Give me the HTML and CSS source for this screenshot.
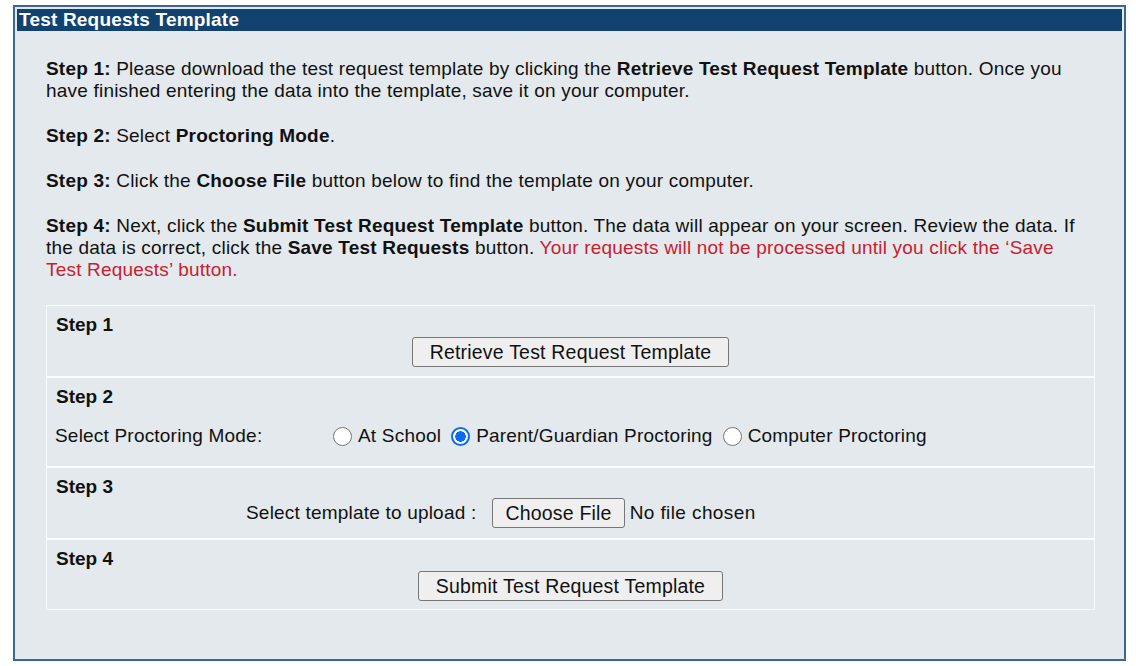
FILE: index.html
```html
<!DOCTYPE html>
<html>
<head>
<meta charset="utf-8">
<link rel="stylesheet" href="styles.css">
</head>
<body>
<div class="panel">
  <div class="panel-title">Test Requests Template</div>
  <div class="panel-body">
    <p><b>Step 1:</b> Please download the test request template by clicking the <b>Retrieve Test Request Template</b> button. Once you have finished entering the data into the template, save it on your computer.</p>
    <p><b>Step 2:</b> Select <b>Proctoring Mode</b>.</p>
    <p><b>Step 3:</b> Click the <b>Choose File</b> button below to find the template on your computer.</p>
    <p><b>Step 4:</b> Next, click the <b>Submit Test Request Template</b> button. The data will appear on your screen. Review the data. If the data is correct, click the <b>Save Test Requests</b> button. <span class="warn">Your requests will not be processed until you click the ‘Save Test Requests’ button.</span></p>

    <div class="steps">
      <div class="step-row">
        <div class="step-label">Step 1</div>
        <div class="center-line"><button class="btn btn-retrieve" type="button">Retrieve Test Request Template</button></div>
      </div>
      <div class="step-row step-row-2">
        <div class="step-label">Step 2</div>
        <div class="mode-line">
          <span class="mode-label">Select Proctoring Mode:</span>
          <label class="radio"><span class="dot"></span>At School</label>
          <label class="radio"><span class="dot checked"></span>Parent/Guardian Proctoring</label>
          <label class="radio"><span class="dot"></span>Computer Proctoring</label>
        </div>
      </div>
      <div class="step-row step-row-3">
        <div class="step-label">Step 3</div>
        <div class="upload-line">
          <span class="upload-label">Select template to upload :</span>
          <button class="btn btn-file" type="button">Choose File</button>
          <span class="file-name">No file chosen</span>
        </div>
      </div>
      <div class="step-row">
        <div class="step-label">Step 4</div>
        <div class="center-line"><button class="btn btn-submit" type="button">Submit Test Request Template</button></div>
      </div>
    </div>
  </div>
</div>
</body>
</html>
```

FILE: styles.css
```css
* { box-sizing: border-box; }

body {
  margin: 0;
  background: #ffffff;
  font-family: "Liberation Sans", Arial, sans-serif;
  font-size: 19px;
  letter-spacing: 0.2px;
  color: #111111;
}

.panel {
  margin: 5px 0 0 13px;
  width: 1113px;
  height: 656px;
  border: 2px solid #3b6792;
  background: #e3e9ec;
  padding: 2px;
}

.panel-title {
  background: #12426f;
  color: #ffffff;
  font-weight: bold;
  letter-spacing: 0.2px;
  height: 22px;
  line-height: 22px;
  padding-left: 2px;
}

.panel-body {
  display: flex;
  flex-direction: column;
  gap: 23px;
  padding: 27px 27px 0 29px;
}

.panel-body p {
  margin: 0 8px 0 0;
  line-height: 22px;
}

.warn { color: #c8202f; }

.steps {
  margin-top: 1px;
  border: 1px solid #f7f9fa;
  display: flex;
  flex-direction: column;
}

.step-row {
  padding: 8px 9px 9px;
  border-bottom: 2px solid #fbfcfd;
}
.step-row:last-child { border-bottom: none; padding-bottom: 8px; }

.step-label {
  font-weight: bold;
  letter-spacing: 0;
  line-height: 22px;
}

.center-line {
  display: flex;
  justify-content: center;
  margin-top: 1px;
}

.btn {
  font-family: inherit;
  font-size: 19.5px;
  letter-spacing: 0.2px;
  color: #111111;
  height: 30px;
  background: #efefef;
  border: 1px solid #767676;
  border-radius: 3px;
  padding: 0 17px;
  line-height: 28px;
}
.btn-file { padding: 0 12px; }

.step-row-2 { padding-bottom: 15px; }

.mode-line {
  display: flex;
  align-items: center;
  height: 30px;
  margin-top: 13px;
  margin-left: -1px;
}
.mode-label { width: 278px; }

.radio {
  display: inline-flex;
  align-items: center;
  margin-right: 10px;
}
.dot {
  width: 19px;
  height: 19px;
  border-radius: 50%;
  border: 1px solid #767676;
  background: #ffffff;
  margin-right: 6px;
  flex: none;
}
.dot.checked {
  border: 2px solid #0a6cf0;
  background: radial-gradient(circle, #0a6cf0 0 5px, #ffffff 5.5px);
}

.step-row-3 { padding-bottom: 10px; }

.upload-line {
  display: flex;
  align-items: center;
  padding-left: 190px;
}
.upload-label { margin-right: 16px; }
.file-name { margin-left: 5px; letter-spacing: 0.4px; }
```
